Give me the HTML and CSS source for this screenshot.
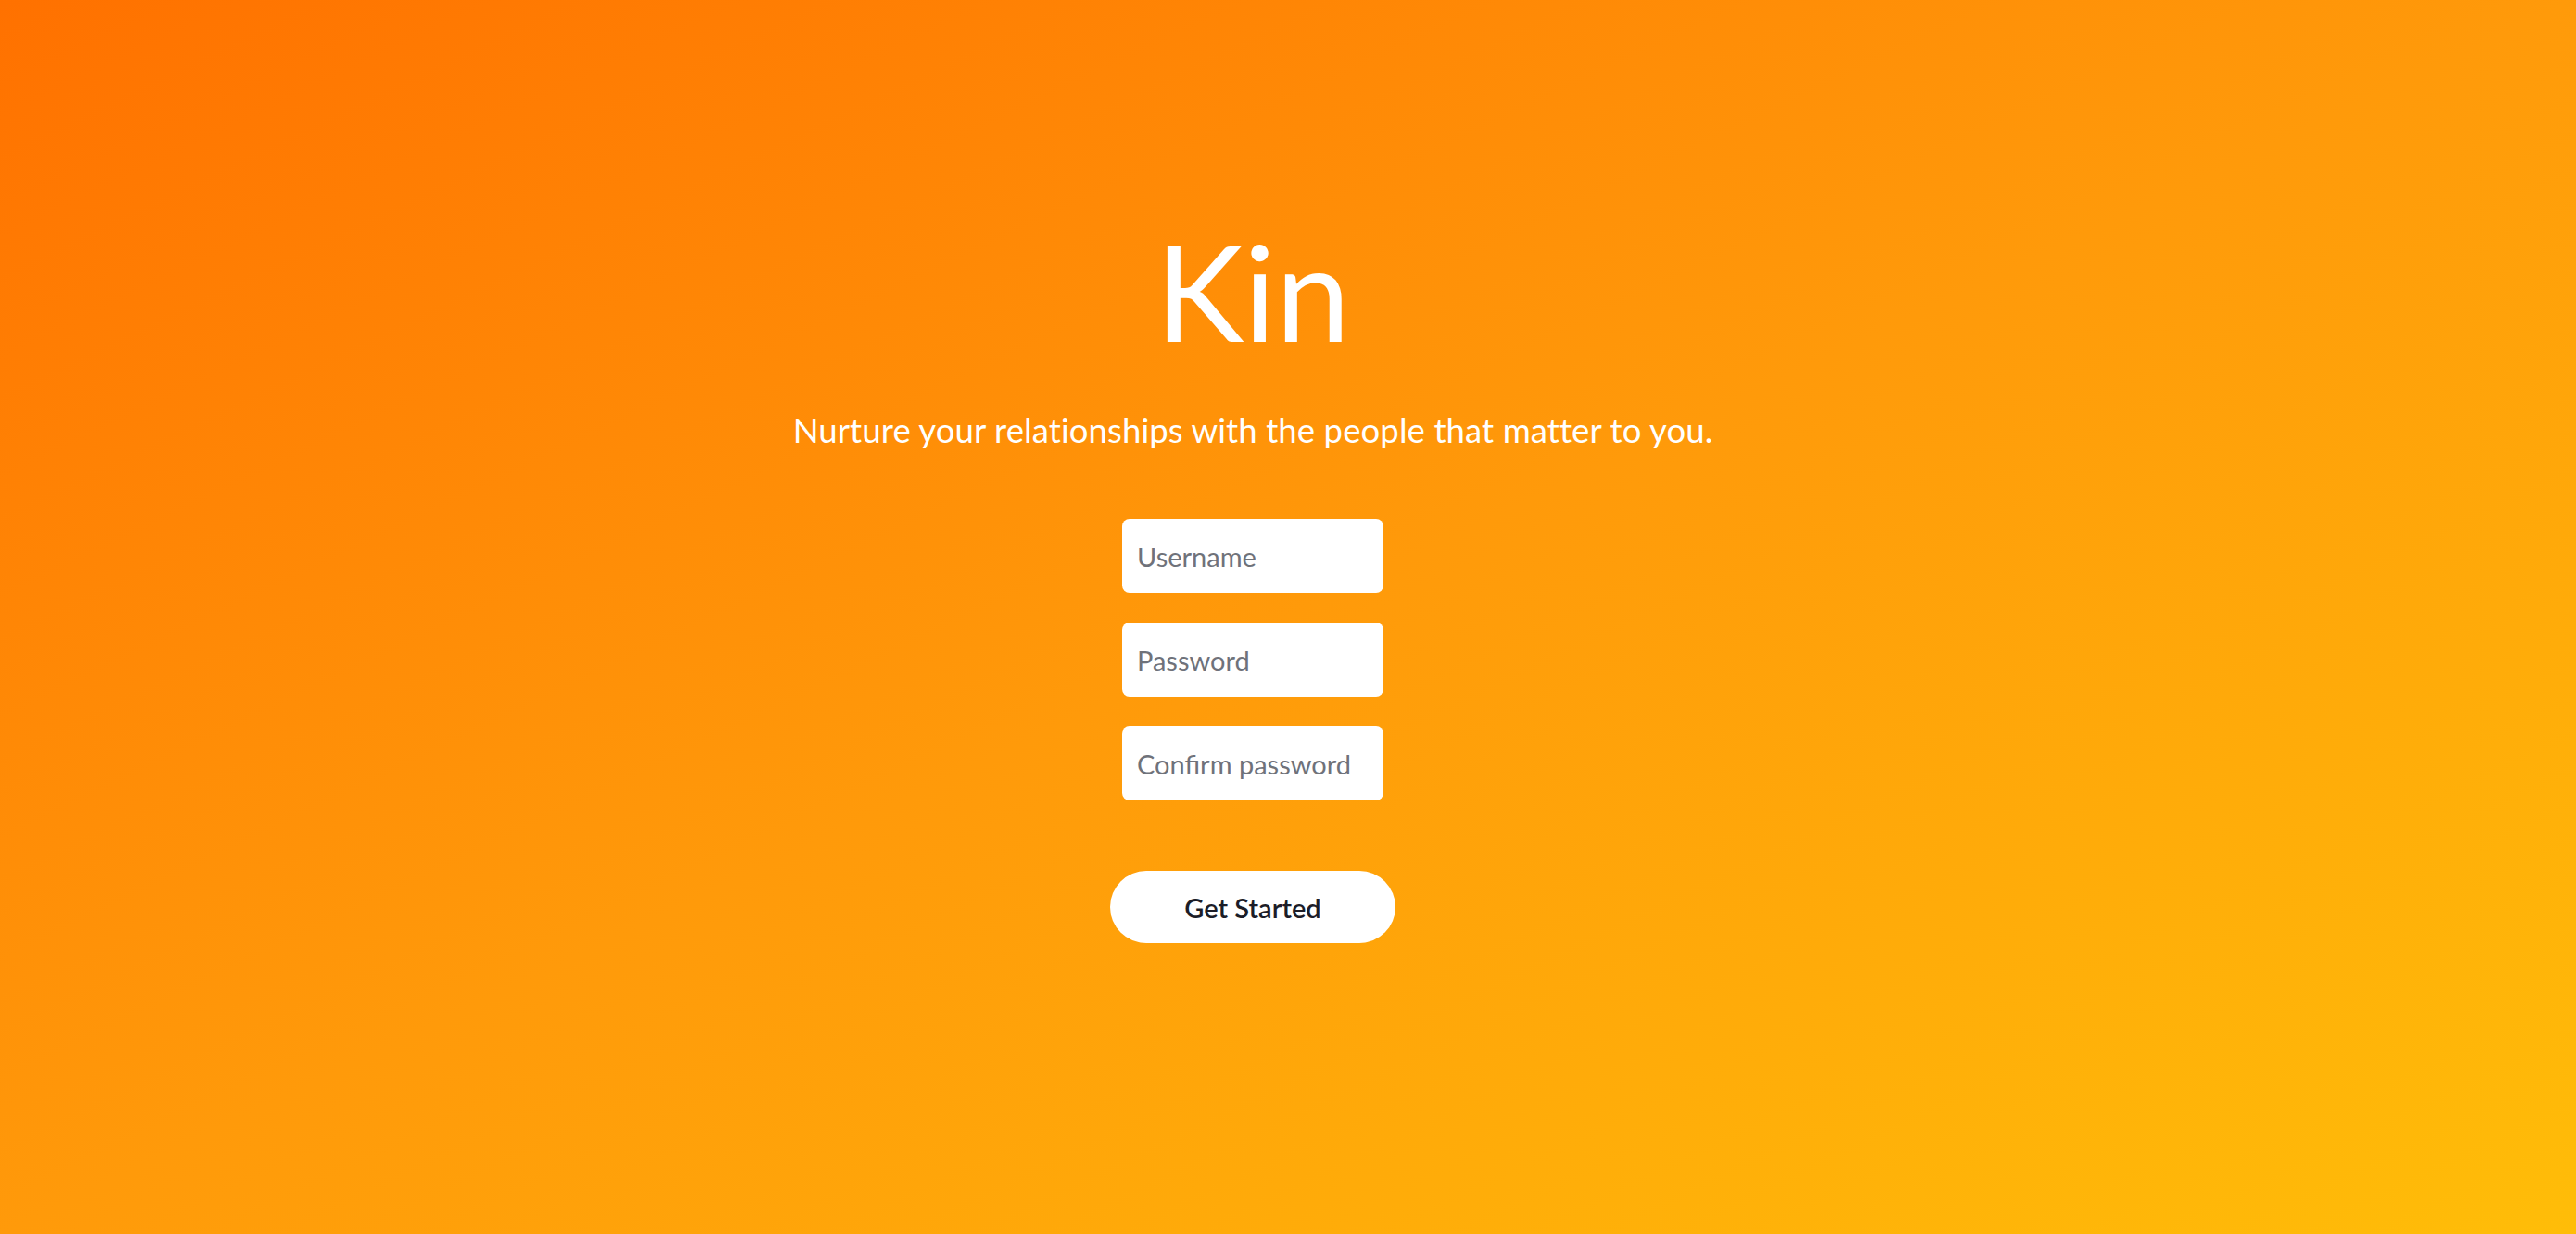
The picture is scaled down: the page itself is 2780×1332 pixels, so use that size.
FILE: index.html
```html
<!DOCTYPE html>
<html lang="en">
<head>
<meta charset="utf-8">
<title>Kin</title>
<link rel="stylesheet" href="styles.css">
</head>
<body>
<main class="page">
  <h1 class="brand">Kin</h1>
  <p class="tagline">Nurture your relationships with the people that matter to you.</p>
  <form class="signup">
    <input class="field" type="text" placeholder="Username">
    <input class="field" type="password" placeholder="Password">
    <input class="field" type="password" placeholder="Confirm password">
    <button class="cta" type="button">Get Started</button>
  </form>
</main>
</body>
</html>
```
FILE: styles.css
```css
html, body {
  margin: 0;
  padding: 0;
  height: 100%;
}
body {
  background: linear-gradient(to bottom right, #ff7100, #ff9a0a 50%, #ffbd08);
  font-family: Lato, "Noto Sans", "Liberation Sans", sans-serif;
  color: #fff;
  overflow: hidden;
}
.page {
  box-sizing: border-box;
  height: 100%;
  display: flex;
  flex-direction: column;
  align-items: center;
  padding-top: 242px;
  padding-right: 76px;
}
.brand {
  margin: 0;
  font-size: 144px;
  line-height: 144px;
  font-weight: 400;
}
.tagline {
  margin: 60px 0 0;
  font-size: 36.5px;
  line-height: 36px;
  font-weight: 400;
  letter-spacing: 0.1px;
}
.signup {
  margin-top: 78px;
  display: flex;
  flex-direction: column;
  align-items: center;
  gap: 32px;
}
.field {
  box-sizing: border-box;
  width: 282px;
  height: 80px;
  border: none;
  border-radius: 8px;
  background: #fff;
  padding: 0 16px;
  font-family: inherit;
  font-size: 29px;
  color: #333;
  outline: none;
}
.field::placeholder {
  color: #6f727a;
}
.cta {
  margin-top: 44px;
  width: 308px;
  height: 78px;
  border: none;
  border-radius: 39px;
  background: #fff;
  font-family: inherit;
  font-size: 29px;
  font-weight: 600;
  color: #1c1d28;
  cursor: pointer;
}
```
